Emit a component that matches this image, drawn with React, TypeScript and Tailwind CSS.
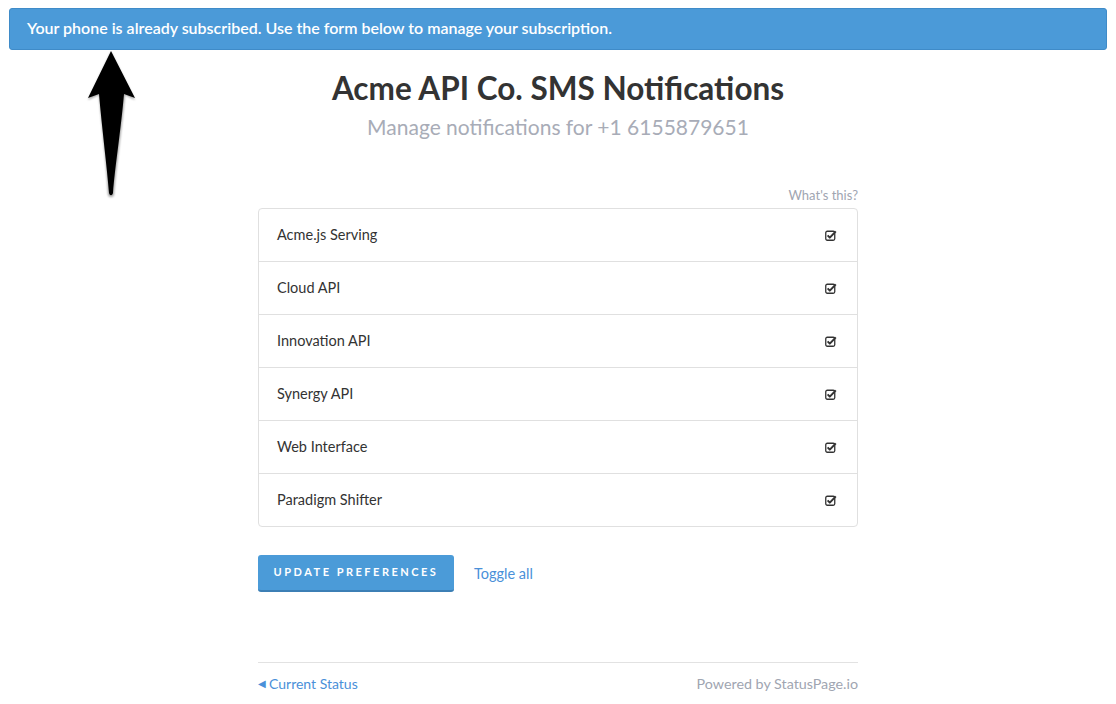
import React from 'react';

const components = [
  'Acme.js Serving',
  'Cloud API',
  'Innovation API',
  'Synergy API',
  'Web Interface',
  'Paradigm Shifter',
];

const CheckSquare = () => (
  <svg width="12" height="11" viewBox="0 0 12 11" className="text-[#333]">
    <rect x="0.75" y="1.25" width="9" height="9" rx="1.5" fill="none" stroke="currentColor" strokeWidth="1.3" />
    <path d="M2.6 5.4 L4.8 7.6 L10.8 1.4" fill="none" stroke="currentColor" strokeWidth="2" strokeLinejoin="round" />
  </svg>
);

const Arrow = () => (
  <svg width="60" height="152" viewBox="0 0 60 152" className="absolute left-[82px] top-[49px]">
    <defs>
      <filter id="sh" x="-20%" y="-10%" width="140%" height="120%">
        <feGaussianBlur stdDeviation="0.8" />
      </filter>
    </defs>
    <path
      d="M29 3 L53 51 L43 46 C40 80 34 120 32 146 C31 149 27 149 26 146 C25 120 20 80 17 46 L6 51 Z"
      fill="#000"
      opacity="0.35"
      filter="url(#sh)"
    />
    <path
      d="M29 2 L53 49 L42 45 C39 80 33 118 31 144 C30 147 28 147 27 144 C25 118 20 80 17 45 L6 49 Z"
      fill="#000"
    />
  </svg>
);

export default function App() {
  return (
    <div className="relative min-h-[704px] bg-white font-['Lato','Open_Sans',sans-serif]">
      <div className="px-[9px] pt-[8px]">
        <div className="h-[42px] flex items-center pl-[17px] pb-[3px] bg-[#4b9ad8] border border-[#3f8bc8] rounded-[3px] text-white text-[16px] font-semibold">
          Your phone is already subscribed. Use the form below to manage your subscription.
        </div>
      </div>

      <Arrow />

      <div className="w-[600px] mx-auto">
        <h1 className="mt-[20px] text-center text-[31.5px] leading-[36px] font-bold text-[#333]">
          Acme API Co. SMS Notifications
        </h1>
        <p className="mt-[8px] text-center text-[21px] leading-[26px] text-[#a8acb7]">
          Manage notifications for +1 6155879651
        </p>

        <div className="mt-[47px] text-right text-[13px] leading-[16px] text-[#a0a5b1]">What's this?</div>

        <div className="mt-[5px] border border-[#e0e0e0] rounded-[4px]">
          {components.map((name, i) => (
            <div
              key={name}
              className={`h-[52px] flex items-center justify-between pl-[18px] pr-[20px] ${
                i > 0 ? 'h-[53px] border-t border-[#e0e0e0]' : ''
              }`}
            >
              <span className="text-[14.5px] text-[#333]">{name}</span>
              <CheckSquare />
            </div>
          ))}
        </div>

        <div className="mt-[28px] flex items-center">
          <button className="h-[37px] w-[196px] bg-[#4b9bd8] border-b-2 border-[#3c7fb5] rounded-[3px] text-white text-[11px] font-bold tracking-[2.5px] uppercase">
            Update Preferences
          </button>
          <a className="ml-[20px] text-[14.5px] text-[#4a90d9]">Toggle all</a>
        </div>

        <div className="mt-[70px] border-t border-[#e2e2e2] pt-[10px] flex justify-between text-[14px]">
          <a className="text-[#4a90d9] flex items-center">
            <span className="text-[10px] mr-[3px]">◀</span>
            <span>Current Status</span>
          </a>
          <span className="text-[#a0a5b1] text-[14.3px]">Powered by StatusPage.io</span>
        </div>
      </div>
    </div>
  );
}
